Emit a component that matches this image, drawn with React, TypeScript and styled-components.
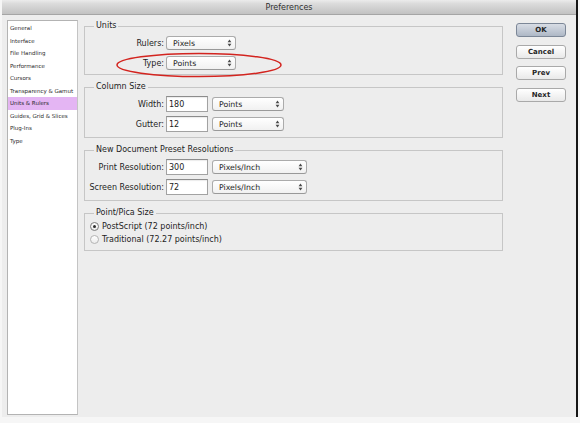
import React from 'react';
import styled, { createGlobalStyle } from 'styled-components';

const GlobalStyle = createGlobalStyle`
  html, body {
    margin: 0;
    padding: 0;
    background: #f7f7f7;
  }
  body {
    font-family: "DejaVu Sans", "Liberation Sans", sans-serif;
    color: #222;
  }
`;

const sidebarItems = [
  'General',
  'Interface',
  'File Handling',
  'Performance',
  'Cursors',
  'Transparency & Gamut',
  'Units & Rulers',
  'Guides, Grid & Slices',
  'Plug-Ins',
  'Type',
];

const Arrows = () => (
  <svg width="5" height="8" viewBox="0 0 5 8">
    <polygon points="0.6,3.2 2.5,0.6 4.4,3.2" fill="#4a4a4a" />
    <polygon points="0.6,4.8 2.5,7.4 4.4,4.8" fill="#4a4a4a" />
  </svg>
);

const Dropdown = ({ value, width }: { value: string; width: number }) => (
  <Select_Body $width={width}>
    <span>{value}</span>
    <Arrows />
  </Select_Body>
);

const App = () => {
  return (
    <Div_Screen>
      <GlobalStyle />
      <Div_Window>
        <Div_TitleBar>Preferences</Div_TitleBar>
        <Div_Body>
          <Ul_Sidebar>
            {sidebarItems.map((item) => (
              <Li_SidebarItem key={item} $selected={item === 'Units & Rulers'}>
                {item}
              </Li_SidebarItem>
            ))}
          </Ul_Sidebar>

          <Div_Main>
            <Fieldset_Group $padBottom={1}>
              <Legend_Group>Units</Legend_Group>
              <Div_Row>
                <Label_Field>Rulers:</Label_Field>
                <Dropdown value="Pixels" width={70} />
              </Div_Row>
              <Div_Row>
                <Label_Field>Type:</Label_Field>
                <Dropdown value="Points" width={70} />
                <Svg_Mark width="166" height="26" viewBox="0 0 166 26">
                  <ellipse cx="83" cy="13" rx="82" ry="11.6" fill="none" stroke="#d3241f" strokeWidth="1.5" />
                </Svg_Mark>
              </Div_Row>
            </Fieldset_Group>

            <Fieldset_Group>
              <Legend_Group>Column Size</Legend_Group>
              <Div_Row>
                <Label_Field>Width:</Label_Field>
                <Input_Value>180</Input_Value>
                <Dropdown value="Points" width={72} />
              </Div_Row>
              <Div_Row>
                <Label_Field>Gutter:</Label_Field>
                <Input_Value>12</Input_Value>
                <Dropdown value="Points" width={72} />
              </Div_Row>
            </Fieldset_Group>

            <Fieldset_Group>
              <Legend_Group>New Document Preset Resolutions</Legend_Group>
              <Div_Row>
                <Label_Field>Print Resolution:</Label_Field>
                <Input_Value>300</Input_Value>
                <Dropdown value="Pixels/Inch" width={95} />
              </Div_Row>
              <Div_Row>
                <Label_Field>Screen Resolution:</Label_Field>
                <Input_Value>72</Input_Value>
                <Dropdown value="Pixels/Inch" width={95} />
              </Div_Row>
            </Fieldset_Group>

            <Fieldset_Group $padBottom={4}>
              <Legend_Group>Point/Pica Size</Legend_Group>
              <Label_Radio>
                <Span_Radio $checked />
                PostScript (72 points/inch)
              </Label_Radio>
              <Label_Radio>
                <Span_Radio />
                Traditional (72.27 points/inch)
              </Label_Radio>
            </Fieldset_Group>
          </Div_Main>

          <Div_Buttons>
            <Button_Dialog $default>OK</Button_Dialog>
            <Button_Dialog>Cancel</Button_Dialog>
            <Button_Dialog>Prev</Button_Dialog>
            <Button_Dialog>Next</Button_Dialog>
          </Div_Buttons>
        </Div_Body>
      </Div_Window>
    </Div_Screen>
  );
};

export default App;

// CSS
const Div_Screen = styled.div`
  width: 580px;
  height: 423px;
  overflow: hidden;
  background: #f6f6f6;
`;

const Div_Window = styled.div`
  margin-left: 2px;
  width: 574px;
  height: 417px;
  border-right: 2px solid #151515;
  background: #ededed;
  display: flex;
  flex-direction: column;
`;

const Div_TitleBar = styled.div`
  height: 14px;
  flex: none;
  display: flex;
  align-items: center;
  justify-content: center;
  font-size: 8px;
  color: #303030;
  background: linear-gradient(#ececec 0%, #dcdcdc 25%, #c2c2c2 100%);
  border-bottom: 1px solid #a5a5a5;
`;

const Div_Body = styled.div`
  flex: 1;
  display: flex;
  padding: 5px 0 2px 5px;
  min-height: 0;
`;

const Ul_Sidebar = styled.ul`
  margin: 0;
  padding: 1px 0 0;
  list-style: none;
  width: 71px;
  box-sizing: border-box;
  background: #ffffff;
  border: 1px solid #b3b3b3;
  border-right-color: #c4c4c4;
  flex: none;
`;

const Li_SidebarItem = styled.li<{ $selected?: boolean }>`
  height: 12.5px;
  line-height: 12.5px;
  padding-left: 2px;
  font-size: 5.5px;
  color: #2a2a2a;
  white-space: nowrap;
  background: ${(p) => (p.$selected ? '#e4b5f3' : 'transparent')};
`;

const Div_Main = styled.div`
  width: 419px;
  margin-left: 6px;
  padding-top: 1px;
  display: flex;
  flex-direction: column;
  gap: 7px;
  flex: none;
`;

const Fieldset_Group = styled.fieldset<{ $padBottom?: number }>`
  margin: 0;
  padding: 2px 0 ${(p) => (p.$padBottom ?? 3)}px;
  border: 1px solid #c6c6c6;
  min-width: 0;
`;

const Legend_Group = styled.legend`
  margin-left: 9px;
  padding: 0 2px;
  font-size: 8px;
  line-height: 10px;
  color: #1e1e1e;
`;

const Div_Row = styled.div`
  position: relative;
  height: 20px;
  display: flex;
  align-items: center;
  gap: 4px;
`;

const Label_Field = styled.label`
  width: 79px;
  margin-right: -2px;
  text-align: right;
  font-size: 8px;
  color: #1e1e1e;
  white-space: nowrap;
`;

const Input_Value = styled.div`
  width: 42px;
  height: 16px;
  box-sizing: border-box;
  padding-left: 2px;
  display: flex;
  align-items: center;
  font-size: 8px;
  background: #ffffff;
  border: 1px solid #a2a2a2;
  border-top-color: #8c8c8c;
  box-shadow: inset 0 1px 1px rgba(0, 0, 0, 0.08);
`;

const Select_Body = styled.div<{ $width: number }>`
  width: ${(p) => p.$width}px;
  height: 14px;
  box-sizing: border-box;
  padding: 0 3px 0 6px;
  display: flex;
  align-items: center;
  justify-content: space-between;
  font-size: 7.8px;
  color: #1e1e1e;
  background: linear-gradient(#ffffff, #f1f1f1);
  border: 1px solid #ababab;
  border-bottom-color: #999999;
  border-radius: 3px;
`;

const Svg_Mark = styled.svg`
  position: absolute;
  left: 31px;
  top: -1px;
  pointer-events: none;
`;

const Label_Radio = styled.label`
  height: 13px;
  display: flex;
  align-items: center;
  gap: 3px;
  padding-left: 5px;
  font-size: 8px;
  color: #1e1e1e;
  white-space: nowrap;
`;

const Span_Radio = styled.span<{ $checked?: boolean }>`
  width: 9px;
  height: 9px;
  box-sizing: border-box;
  border-radius: 50%;
  border: 1px solid ${(p) => (p.$checked ? '#7d7d7d' : '#b4b4b4')};
  background: linear-gradient(#ffffff, #ececec);
  display: flex;
  align-items: center;
  justify-content: center;

  &::after {
    content: '';
    width: 3px;
    height: 3px;
    border-radius: 50%;
    background: #2c2c2c;
    display: ${(p) => (p.$checked ? 'block' : 'none')};
  }
`;

const Div_Buttons = styled.div`
  width: 50px;
  margin-left: 13px;
  padding-top: 3px;
  display: flex;
  flex-direction: column;
  gap: 7.5px;
  flex: none;
`;

const Button_Dialog = styled.button<{ $default?: boolean }>`
  height: 14px;
  padding: 0;
  box-sizing: border-box;
  font-family: "DejaVu Sans", "Liberation Sans", sans-serif;
  font-size: 7px;
  font-weight: bold;
  color: #262626;
  border-radius: 3px;
  border: 1px solid ${(p) => (p.$default ? '#7c8797' : '#a9a9a9')};
  background: ${(p) =>
    p.$default
      ? 'linear-gradient(#d8dde5, #aeb8c6)'
      : 'linear-gradient(#ffffff, #e9e9e9)'};
`;
